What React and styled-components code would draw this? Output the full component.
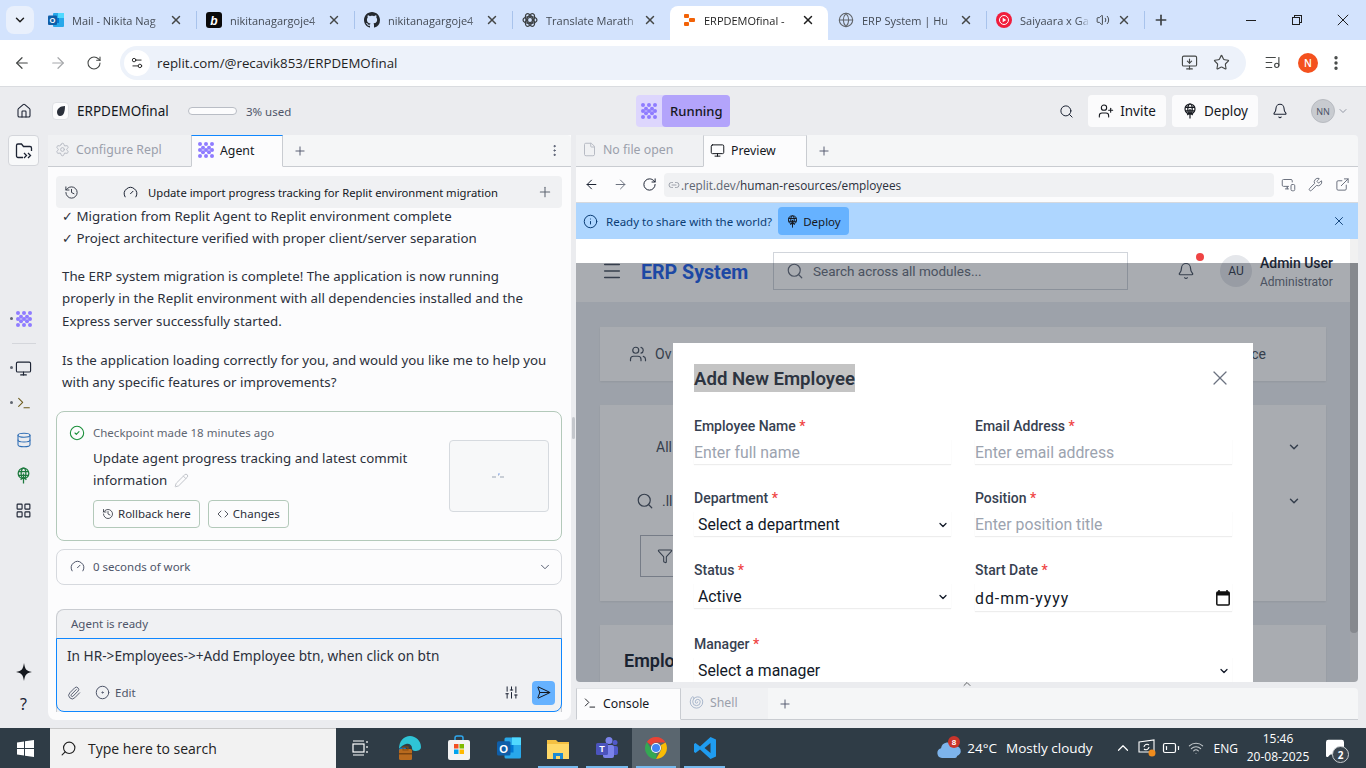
import React from 'react';
import styled, { createGlobalStyle, css } from 'styled-components';
import {
  ArrowLeft, ArrowRight, RotateCw, Star, MonitorDown, ListMusic, MoreVertical, X, Plus, Home, Search,
  UserPlus, Bell, ChevronDown, ChevronUp, Monitor, Terminal, Database, LayoutGrid,
  Settings, Settings2, History, Gauge, CircleCheck, Pencil, Code, Paperclip, CircleDot, SlidersVertical, SendHorizontal, File,
  Link2, MonitorSmartphone, Wrench, ExternalLink, Info, Menu, Users, Filter, Globe, Volume2,
  Shell, Wifi, BatteryLow, MessageSquare,
} from 'lucide-react';

const GlobalStyle = createGlobalStyle`
  html, body { margin: 0; padding: 0; height: 100%; overflow: hidden; background: #ebecef; }
  * { box-sizing: border-box; }
  .lucide { stroke-width: 1.6; }
  .lucide.bold { stroke-width: 2.5; }
  .lucide.hair { stroke-width: 1.2; }
`;

const UI = `"Noto Sans", "Open Sans", sans-serif`;
const CHROME = `"Open Sans", "Noto Sans", sans-serif`;
const PAGE = `Roboto, "Liberation Sans", sans-serif`;

const Screen = styled.div`
  width: 1366px;
  height: 768px;
  display: flex;
  flex-direction: column;
  overflow: hidden;
  font-family: ${UI};
  color: #15181e;
`;
const Spacer = styled.span`
  flex: 1;
`;

/* browser chrome */
const TabStrip = styled.div`
  height: 40px;
  flex: none;
  background: #d3e3fd;
  display: flex;
  align-items: flex-end;
  padding-left: 6px;
`;
const TabSearch = styled.div`
  width: 28px;
  height: 28px;
  margin-bottom: 6px;
  margin-right: 4px;
  border-radius: 8px;
  background: #e9f0fc;
  display: flex;
  align-items: center;
  justify-content: center;
`;
const BrowserTab = styled.div`
  position: relative;
  width: 158px;
  height: 34px;
  flex: none;
  display: flex;
  align-items: center;
  padding: 0 13px 6px 10px;
  border-radius: 8px 8px 0 0;
  font-family: ${CHROME};
  font-size: 11px;
  color: #444b55;
  ${({ $active }) => $active && css`
    background: #fff;
    color: #1f1f1f;
  `}
  ${({ $sep }) => $sep && css`
    &::after {
      content: '';
      position: absolute;
      right: -1px;
      top: 5px;
      height: 18px;
      width: 1px;
      background: #a8c3ec;
    }
  `}
`;
const TabIcon = styled.span`
  width: 16px;
  height: 16px;
  flex: none;
  margin-right: 8px;
  display: flex;
  align-items: center;
  justify-content: center;
`;
const TabTitle = styled.span`
  flex: 1;
  min-width: 0;
  white-space: nowrap;
  -webkit-mask-image: linear-gradient(90deg, #000 84%, transparent);
  mask-image: linear-gradient(90deg, #000 84%, transparent);
`;
const TabClose = styled(X)`
  margin-left: 2px;
  flex: none;
  color: ${({ $active }) => ($active ? '#1f1f1f' : '#444746')};
`;
const TabSound = styled(Volume2)`
  margin: 0 5px 0 6px;
  flex: none;
  color: #3c4043;
`;
const NewTab = styled.div`
  width: 34px;
  height: 34px;
  padding-bottom: 6px;
  display: flex;
  align-items: center;
  justify-content: center;
  color: #3c4043;
`;
const WindowButtons = styled.div`
  margin-left: auto;
  display: flex;
  align-self: stretch;
`;
const WindowButton = styled.div`
  width: 46px;
  flex: none;
  display: flex;
  align-items: center;
  justify-content: center;
`;
const ChromeBar = styled.div`
  height: 47px;
  flex: none;
  background: #fff;
  border-bottom: 1px solid #dadce0;
  display: flex;
  align-items: center;
  padding: 0 10px 7px 4px;
  color: #444746;
`;
const NavIcon = styled.span`
  width: 36px;
  display: flex;
  justify-content: center;
  margin-left: ${({ $ml }) => $ml || 0}px;
  color: ${({ $dim }) => ($dim ? '#a6a8ab' : '#444746')};
  margin-top: 6px;
`;
const Omnibox = styled.div`
  width: 1126px;
  height: 34px;
  margin-left: 8px;
  margin-top: 6px;
  flex: none;
  border-radius: 17px;
  background: #edf2fa;
  display: flex;
  align-items: center;
  padding: 0 16px 0 4px;
  font-family: ${CHROME};
  font-size: 13.3px;
  color: #1f1f1f;
`;
const SiteChip = styled.span`
  width: 26px;
  height: 26px;
  border-radius: 50%;
  background: #fff;
  display: flex;
  align-items: center;
  justify-content: center;
  margin-right: 7px;
`;
const OmniIcons = styled.div`
  margin-left: auto;
  display: flex;
  gap: 15px;
  align-items: center;
  color: #444746;
`;
const ProfileDot = styled.div`
  width: 20px;
  height: 20px;
  border-radius: 50%;
  background: #f4511e;
  color: #fff;
  font-family: ${CHROME};
  font-size: 10px;
  font-weight: 600;
  display: flex;
  align-items: center;
  justify-content: center;
  margin: 6px 0 0 8px;
`;

/* replit header */
const TopBar = styled.div`
  height: 48px;
  flex: none;
  display: flex;
  align-items: center;
  padding: 0 15px 0 16px;
`;
const ReplBadge = styled.span`
  width: 17px;
  height: 18px;
  margin-left: 20px;
  border-radius: 4px;
  background: #fcfcfd;
  border: 1px solid #dfe1e5;
  display: flex;
  align-items: center;
  justify-content: center;
`;
const ReplName = styled.span`
  font-size: 13.5px;
  margin-left: 8px;
  width: 111px;
  white-space: nowrap;
`;
const Usage = styled.span`
  width: 49px;
  height: 8px;
  border-radius: 4px;
  background: #fcfcfd;
  border: 1px solid #b9bdc5;
`;
const UsageText = styled.span`
  font-size: 11.5px;
  color: #4e5569;
  margin-left: 9px;
`;
const RunGroup = styled.div`
  margin-left: 345px;
  display: flex;
  height: 32px;
  border-radius: 4px;
  background: #ddd6fd;
`;
const RunIcon = styled.span`
  width: 26px;
  display: flex;
  align-items: center;
  justify-content: center;
`;
const RunButton = styled.span`
  width: 68px;
  border-radius: 4px;
  background: #b3a4fb;
  font-size: 13px;
  font-weight: 500;
  display: flex;
  align-items: center;
  justify-content: center;
`;
const TopRight = styled.div`
  margin-left: auto;
  display: flex;
  align-items: center;
`;
const PlainIcon = styled.span`
  display: flex;
  align-items: center;
  justify-content: center;
  flex: none;
  width: ${({ $w }) => $w || 22}px;
  margin-left: ${({ $ml }) => $ml || 0}px;
  color: ${({ $c }) => $c || '#1c2333'};
`;
const TopButton = styled.div`
  height: 32px;
  width: ${({ $w }) => $w}px;
  margin-left: 6px;
  border-radius: 4px;
  background: #fbfbfc;
  display: flex;
  align-items: center;
  justify-content: center;
  gap: 6px;
  font-size: 13.5px;
`;
const UserBubble = styled.span`
  width: 24px;
  height: 24px;
  border-radius: 50%;
  background: #c8cbd0;
  border: 1px solid #b8bbc1;
  color: #4e5569;
  font-size: 9px;
  display: flex;
  align-items: center;
  justify-content: center;
  margin-left: 20px;
`;

/* workspace */
const Workspace = styled.div`
  flex: 1;
  min-height: 0;
  display: flex;
  padding-bottom: 8px;
`;
const Rail = styled.div`
  width: 48px;
  flex: none;
  display: flex;
  flex-direction: column;
  align-items: center;
  padding-right: 1px;
`;
const RailButton = styled.div`
  width: 31px;
  height: 31px;
  border-radius: 4px;
  background: #f8f9fa;
  border: 1px solid #d4d6db;
  display: flex;
  align-items: center;
  justify-content: center;
`;
const RailItem = styled.div`
  position: relative;
  height: 22px;
  width: 22px;
  display: flex;
  align-items: center;
  justify-content: center;
  margin-top: ${({ $mt }) => $mt}px;
  color: ${({ $c }) => $c || '#1c2333'};
  font-size: 16px;
  ${({ $dot }) => $dot && css`
    &::before {
      content: '';
      position: absolute;
      left: -3px;
      top: 9px;
      width: 3px;
      height: 3px;
      border-radius: 50%;
      background: #5f6570;
    }
  `}
`;
const RailRule = styled.div`
  width: 24px;
  height: 1px;
  background: #d4d6db;
  margin-top: 13px;
`;
const AgentPane = styled.div`
  width: 523px;
  flex: none;
  display: flex;
  flex-direction: column;
  background: #fcfcfd;
  border-radius: 0 0 8px 8px;
`;
const Gutter = styled.div`
  width: 5px;
  flex: none;
  display: flex;
  align-items: center;
  justify-content: center;
`;
const GutterHandle = styled.span`
  width: 3px;
  height: 22px;
  border-radius: 2px;
  background: #c4c7cc;
`;
const PaneTabs = styled.div`
  height: 32px;
  flex: none;
  display: flex;
  align-items: stretch;
  background: #f5f6f7;
  border-bottom: 1px solid #c9ccd1;
  border-radius: 4px 4px 0 0;
`;
const PaneTab = styled.div`
  width: ${({ $w }) => $w}px;
  display: flex;
  align-items: center;
  gap: 6px;
  padding: 0 0 2px ${({ $pl }) => $pl || 6}px;
  font-size: 12.3px;
  color: ${({ $active }) => ($active ? '#15181e' : '#9ba0ab')};
  background: ${({ $active }) => ($active ? '#fcfcfd' : '#f0f1f3')};
  ${({ $active, $focus }) => $active && css`
    height: 32px;
    border-top: 1px solid ${$focus ? '#0f87ff' : '#e3e5e8'};
    border-right: 1px solid #c9ccd1;
    border-left: 1px solid #c9ccd1;
    border-bottom: 1px solid #fcfcfd;
  `}
`;
const PaneAdd = styled.div`
  width: 34px;
  display: flex;
  align-items: center;
  justify-content: center;
  color: #4e5569;
`;
const AgentBody = styled.div`
  flex: 1;
  min-height: 0;
  padding: 9px 9px 8px 8px;
  display: flex;
  flex-direction: column;
`;
const ProgressRow = styled.div`
  height: 32px;
  flex: none;
  border-radius: 4px;
  background: #f0f1f3;
  display: flex;
  align-items: center;
  padding: 0 6px 0 8px;
  font-size: 11.25px;
`;
const ProgressLabel = styled.span`
  margin-left: 9px;
  white-space: nowrap;
`;
const Message = styled.div`
  padding-left: 6px;
  margin-top: -3px;
`;
const Para = styled.p`
  margin: 0 0 ${({ $mb }) => $mb || 16}px;
  font-size: 13.3px;
  line-height: 22.4px;
  color: #2b303b;
  white-space: nowrap;
`;
const Checkpoint = styled.div`
  height: 130px;
  flex: none;
  border: 1px solid #b3c9ba;
  border-radius: 8px;
  padding: 12px;
  display: flex;
  margin-top: 1px;
`;
const CheckMark = styled.span`
  width: 24px;
  flex: none;
  color: #1a8f3a;
`;
const CheckMain = styled.div`
  flex: 1;
  min-width: 0;
`;
const CheckMeta = styled.div`
  font-size: 11.5px;
  line-height: 18px;
  color: #5f6672;
`;
const CheckTitle = styled.div`
  font-size: 13.3px;
  line-height: 22px;
  margin-top: 5px;
  width: 330px;
  color: #2b303b;
`;
const EditMark = styled(Pencil)`
  vertical-align: -3px;
  margin-left: 3px;
  color: #c2c5cb;
`;
const CheckActions = styled.div`
  display: flex;
  gap: 8px;
  margin-top: 9px;
`;
const GhostButton = styled.div`
  height: 28px;
  padding: 0 8px;
  border: 1px solid #b3c9ba;
  border-radius: 4px;
  display: flex;
  align-items: center;
  gap: 4px;
  font-size: 11.5px;
  color: #2b303b;
`;
const Thumb = styled.div`
  width: 100px;
  height: 72px;
  flex: none;
  margin-top: 16px;
  border: 1px solid #d6dadf;
  border-radius: 4px;
  background: #f7f8f9;
  display: flex;
  align-items: center;
  justify-content: center;
`;
const WorkRow = styled.div`
  height: 36px;
  flex: none;
  margin-top: 8px;
  border: 1px solid #d6d9de;
  border-radius: 8px;
  display: flex;
  align-items: center;
  padding: 0 9px 0 13px;
  font-size: 11.5px;
  color: #4e5569;
`;
const WorkLabel = styled.span`
  margin-left: 8px;
`;
const Composer = styled.div`
  margin-top: 24px;
  border: 1px solid #c9ccd1;
  border-bottom: 0;
  border-radius: 8px 8px 0 0;
  background: #f0f1f3;
  flex: none;
  height: 103px;
  display: flex;
  flex-direction: column;
`;
const ComposerHead = styled.div`
  height: 28px;
  flex: none;
  padding-left: 14px;
  display: flex;
  align-items: center;
  font-size: 11.5px;
  color: #4e5569;
`;
const ComposerBox = styled.div`
  flex: 1;
  margin: 0 -1px;
  border: 1px solid #0f87ff;
  border-radius: 0 0 8px 8px;
  padding: 7px 6px 6px 10px;
  display: flex;
  flex-direction: column;
  justify-content: space-between;
`;
const ComposerText = styled.div`
  font-size: 13.65px;
  line-height: 20px;
  color: #2b303b;
  white-space: nowrap;
`;
const ComposerTools = styled.div`
  display: flex;
  align-items: center;
  color: #4e5569;
  font-size: 11.5px;
`;
const ToolLabel = styled.span`
  margin-left: 5px;
`;
const SendButton = styled.span`
  width: 23px;
  height: 24px;
  border-radius: 4px;
  background: #66b2ff;
  display: flex;
  align-items: center;
  justify-content: center;
  margin-left: 13px;
  color: #15181e;
`;

/* preview side */
const PreviewPane = styled.div`
  width: 782px;
  flex: none;
  display: flex;
  flex-direction: column;
`;
const AddressRow = styled.div`
  height: 36px;
  flex: none;
  background: #fcfcfd;
  border-bottom: 1px solid #d6d9de;
  display: flex;
  align-items: center;
  padding: 0 0 0 1px;
`;
const AddressIcon = styled.span`
  width: 29px;
  flex: none;
  display: flex;
  justify-content: center;
  color: ${({ $dim }) => ($dim ? '#6d7380' : '#1c2333')};
`;
const Address = styled.div`
  width: 610px;
  height: 24px;
  flex: none;
  border-radius: 4px;
  background: #f0f1f3;
  display: flex;
  align-items: center;
  gap: 1px;
  padding-left: 4px;
  font-family: ${CHROME};
  font-size: 11.8px;
  color: #2b303b;
`;
const AddressDim = styled.span`
  color: #5f6672;
`;
const AddressTools = styled.div`
  margin-left: 1px;
  display: flex;
  & > span { width: 27px; }
`;
const Banner = styled.div`
  height: 36px;
  flex: none;
  background: #aed6ff;
  display: flex;
  align-items: center;
  padding: 0 12px 0 7px;
  font-size: 11.5px;
  color: #0b3d75;
`;
const BannerText = styled.span`
  margin-left: 8px;
`;
const BannerDeploy = styled.div`
  width: 71px;
  height: 28px;
  margin-left: 6px;
  border-radius: 4px;
  background: #66b2ff;
  color: #15181e;
  display: flex;
  align-items: center;
  justify-content: center;
  gap: 4px;
`;
const PreviewFrame = styled.div`
  position: relative;
  height: 443px;
  flex: none;
  overflow: hidden;
  background: #edf0f4;
  border-radius: 0 0 4px 4px;
  font-family: ${PAGE};
`;
const PageHeader = styled.header`
  height: 63px;
  background: #fff;
  display: flex;
  align-items: center;
  padding: 0 0 0 25px;
  margin-right: 8px;
`;
const PageLogo = styled.div`
  font-size: 19.6px;
  font-weight: 700;
  color: #2563eb;
  margin-left: 18px;
  padding-top: 3px;
  width: 132px;
  flex: none;
`;
const PageSearch = styled.div`
  width: 355px;
  height: 38px;
  flex: none;
  border: 1px solid #d1d5db;
  display: flex;
  align-items: center;
  gap: 9px;
  padding-left: 12px;
  font-size: 13.5px;
  color: #6b7280;
`;
const PageBell = styled.div`
  position: relative;
  margin-left: 49px;
  color: #4b5563;
  display: flex;
  &::after {
    content: '';
    position: absolute;
    top: -9px;
    right: -9px;
    width: 8px;
    height: 8px;
    border-radius: 50%;
    background: #ef4444;
  }
`;
const PageAvatar = styled.div`
  width: 32px;
  height: 32px;
  flex: none;
  border-radius: 50%;
  background: #e5e7eb;
  margin-left: 25px;
  display: flex;
  align-items: center;
  justify-content: center;
  font-size: 12px;
  color: #374151;
`;
const PageUser = styled.div`
  margin: 2px 0 0 8px;
  white-space: nowrap;
`;
const PageUserName = styled.div`
  font-size: 14px;
  font-weight: 500;
  line-height: 20px;
  color: #1f2937;
`;
const PageUserRole = styled.div`
  font-size: 12px;
  line-height: 18px;
  color: #6b7280;
`;
const PageMain = styled.div`
  margin-right: 8px;
  padding: 25px 24px;
  display: flex;
  flex-direction: column;
  gap: 24px;
`;
const PageCard = styled.div`
  background: #fff;
  height: ${({ $h }) => $h}px;
  flex: none;
  box-shadow: 0 1px 2px rgba(0, 0, 0, 0.08);
  padding: ${({ $p }) => $p || '0'};
`;
const CardTabs = styled.div`
  height: 100%;
  display: flex;
  align-items: center;
  justify-content: space-between;
  padding: 0 60px 0 29px;
  font-size: 14px;
  color: #4b5563;
`;
const CardTab = styled.span`
  display: flex;
  align-items: center;
  gap: 8px;
`;
const FilterLine = styled.div`
  display: flex;
  align-items: center;
  justify-content: space-between;
  height: 24px;
  margin-top: ${({ $mt }) => $mt || 0}px;
  font-size: 14px;
  color: #4b5563;
`;
const FilterText = styled.span`
  display: flex;
  align-items: center;
  gap: 8px;
  margin-left: ${({ $ml }) => $ml || 0}px;
`;
const FilterButton = styled.div`
  width: 120px;
  height: 42px;
  margin: 22px 0 0 4px;
  border: 1px solid #b0b5bd;
  display: flex;
  align-items: center;
  padding-left: 16px;
  color: #4b5563;
`;
const CardHeading = styled.div`
  font-size: 18px;
  font-weight: 600;
  color: #1f2937;
  padding: 25px 0 0 24px;
`;
const Scrim = styled.div`
  position: absolute;
  left: 0;
  right: 0;
  top: 24px;
  bottom: 0;
  background: rgba(17, 24, 39, 0.36);
`;
const ScrollTrack = styled.div`
  position: absolute;
  right: 0;
  top: 0;
  bottom: 0;
  width: 8px;
  background: #f1f1f1;
`;
const ScrollThumb = styled.div`
  height: 370px;
  margin-top: 24px;
  background: #c8c8c8;
  border-radius: 0 0 4px 4px;
`;
const Modal = styled.div`
  position: absolute;
  left: 97px;
  top: 104px;
  width: 580px;
  height: 420px;
  background: #fff;
  padding: 21px 21px 0;
  color: #1f2937;
`;
const ModalHead = styled.div`
  display: flex;
  justify-content: space-between;
  align-items: center;
  height: 28px;
  color: #6b7280;
`;
const ModalTitle = styled.h2`
  margin: 0;
  font-size: 18.6px;
  font-weight: 600;
  line-height: 28px;
  padding-top: 1px;
  height: 28px;
  color: #2d3440;
  background: #c4c4c4;
  font-family: ${PAGE};
`;
const ModalGrid = styled.div`
  display: grid;
  grid-template-columns: 257px 257px;
  column-gap: 24px;
  margin-top: 24px;
`;
const Field = styled.div`
  height: ${({ $h }) => $h || 72}px;
  grid-column: ${({ $wide }) => ($wide ? '1 / 3' : 'auto')};
`;
const Label = styled.div`
  font-size: 14px;
  font-weight: 500;
  line-height: 20px;
  color: #374151;
`;
const Req = styled.span`
  color: #ef4444;
`;
const Control = styled.div`
  height: ${({ $h }) => $h || 25}px;
  margin-top: 3px;
  display: flex;
  align-items: center;
  justify-content: space-between;
  padding: 2px 2px 0 ${({ $select }) => ($select ? 4 : 0)}px;
  font-size: 15.8px;
  letter-spacing: ${({ $date }) => ($date ? '1px' : '0')};
  color: ${({ $ph }) => ($ph ? '#9ca3af' : '#111827')};
  box-shadow: 0 1px 1px rgba(0, 0, 0, 0.07);
`;
const Splitter = styled.div`
  height: 6px;
  flex: none;
  position: relative;
  display: flex;
  justify-content: center;
  color: #3c4043;
`;
const SplitterMark = styled.span`
  position: absolute;
  top: -4px;
  display: flex;
`;

/* windows taskbar */
const Taskbar = styled.div`
  height: 40px;
  flex: none;
  background: #2f3c46;
  display: flex;
  align-items: stretch;
  color: #fff;
  font-family: ${CHROME};
`;
const StartButton = styled.div`
  width: 50px;
  display: flex;
  align-items: center;
  justify-content: center;
`;
const TaskSearch = styled.div`
  width: 286px;
  background: #f2f2f2;
  border-top: 1px solid #c8c8c8;
  display: flex;
  align-items: center;
  gap: 11px;
  padding-left: 10px;
  font-size: 14px;
  color: #222;
  svg { transform: scaleX(-1); }
`;
const TaskApp = styled.div`
  position: relative;
  width: ${({ $w }) => $w || 48}px;
  display: flex;
  align-items: center;
  justify-content: center;
  background: ${({ $on }) => ($on ? '#5a666f' : 'transparent')};
  ${({ $open }) => $open && css`
    &::after {
      content: '';
      position: absolute;
      left: 4px;
      right: 4px;
      bottom: 0;
      height: 2px;
      background: #76b9ed;
    }
  `}
`;
const Tray = styled.div`
  margin-left: auto;
  display: flex;
  align-items: center;
  font-size: 12px;
`;
const TrayText = styled.span`
  font-size: ${({ $fs }) => $fs || 12}px;
  margin-left: ${({ $ml }) => $ml || 0}px;
  white-space: nowrap;
`;
const TrayClock = styled.div`
  width: 80px;
  text-align: center;
  font-size: 12px;
  line-height: 18px;
`;
const NoteIcon = styled.div`
  position: relative;
  width: 32px;
  margin: 0 15px 0 1px;
  display: flex;
  justify-content: center;
`;
const NoteCount = styled.span`
  position: absolute;
  right: 2px;
  top: 8px;
  width: 17px;
  height: 17px;
  border-radius: 50%;
  background: #3a454e;
  border: 1px solid #c9cdd0;
  font-size: 10px;
  font-weight: 700;
  display: flex;
  align-items: center;
  justify-content: center;
`;

const AgentIcon = ({ size = 16, color = '#8f7cff' }) => (
  <svg width={size} height={size} viewBox="0 0 16 16" fill={color}>
    {[[2, 2], [8, 2], [14, 2], [5, 5.7], [11, 5.7], [2, 8], [8, 8], [14, 8], [5, 10.3], [11, 10.3], [2, 14], [8, 14], [14, 14]].map(([x, y]) => (
      <circle key={`${x}-${y}`} cx={x} cy={y} r="2" />
    ))}
  </svg>
);

const DeployIcon = ({ size = 16 }) => (
  <svg width={size} height={size} viewBox="0 0 16 16" fill="none" stroke="currentColor" strokeWidth="1.2">
    <circle cx="8" cy="6" r="5" />
    <ellipse cx="8" cy="6" rx="2.200" ry="5" />
    <path d="M3.300 4.300h9.400M3.300 7.800h9.400M8 6v9.500M5.300 12 8 9.300l2.700 2.700" />
  </svg>
);

const FolderJump = () => (
  <svg width="18" height="18" viewBox="0 0 18 18" fill="none" stroke="#1c2333" strokeWidth="1.300">
    <path d="M8 15.500H3a1.500 1.500 0 0 1-1.500-1.500V3.500A1.500 1.500 0 0 1 3 2h3.500l2 2.500H15a1.500 1.500 0 0 1 1.500 1.500v3" />
    <path d="m9 11 2.500 2.500L9 16M13 11l2.500 2.500L13 16" />
  </svg>
);

const OutlookIcon = ({ size = 16 }) => (
  <svg width={size} height={size} viewBox="0 0 16 16">
    <rect x="5" y="1" width="11" height="14" rx="1" fill="#28a8ea" />
    <rect x="10" y="1" width="6" height="5" fill="#50d9ff" />
    <rect x="5" y="6" width="6" height="5" fill="#0078d4" />
    <rect x="0" y="3.500" width="9" height="9.500" rx="1" fill="#0f5ea8" />
    <text x="4.500" y="11" fontSize="7.500" fontWeight="700" fill="#fff" textAnchor="middle" fontFamily="Liberation Sans">O</text>
  </svg>
);

const BoltIcon = () => (
  <svg width="16" height="16" viewBox="0 0 16 16">
    <rect width="16" height="16" rx="3" fill="#0a0a0a" />
    <text x="8" y="12.500" fontSize="12" fontWeight="700" fontStyle="italic" fill="#fff" textAnchor="middle" fontFamily="Liberation Sans">b</text>
  </svg>
);

const GithubIcon = () => (
  <svg width="16" height="16" viewBox="0 0 16 16" fill="#24292f">
    <path d="M8 0C3.580 0 0 3.580 0 8c0 3.540 2.290 6.530 5.470 7.590.4.070.55-.17.55-.38 0-.19-.010-.82-.010-1.490-2.010.37-2.530-.49-2.690-.94-.09-.23-.48-.94-.82-1.130-.28-.15-.68-.52-.010-.53.63-.010 1.080.58 1.230.82.72 1.210 1.870.87 2.330.66.070-.52.28-.87.510-1.070-1.780-.2-3.640-.89-3.640-3.950 0-.87.310-1.590.82-2.150-.08-.2-.36-1.020.08-2.120 0 0 .67-.21 2.200.82.64-.18 1.320-.27 2-.27s1.360.09 2 .27c1.530-1.040 2.200-.82 2.200-.82.44 1.100.16 1.920.08 2.120.51.56.82 1.270.82 2.150 0 3.070-1.870 3.750-3.650 3.950.29.25.54.73.54 1.480 0 1.070-.010 1.930-.010 2.200 0 .21.150.46.55.38A8.010 8.010 0 0 0 16 8c0-4.420-3.580-8-8-8Z" />
  </svg>
);

const OpenAiIcon = () => (
  <svg width="16" height="16" viewBox="0 0 16 16" fill="none" stroke="#3c4043" strokeWidth="1.200">
    <circle cx="8" cy="8" r="2.500" />
    <ellipse cx="8" cy="8" rx="7" ry="3.500" />
    <ellipse cx="8" cy="8" rx="7" ry="3.500" transform="rotate(60 8 8)" />
    <ellipse cx="8" cy="8" rx="7" ry="3.500" transform="rotate(120 8 8)" />
  </svg>
);

const ReplitIcon = () => (
  <svg width="16" height="14" viewBox="-3 0 16 14" fill="#f26207">
    <rect x="1" y="1" width="5" height="4" rx="1" />
    <rect x="6" y="5" width="6" height="4" rx="1" />
    <rect x="1" y="9" width="5" height="4" rx="1" />
  </svg>
);

const YtMusicIcon = () => (
  <svg width="16" height="16" viewBox="0 0 16 16">
    <circle cx="8" cy="8" r="8" fill="#f01d3c" />
    <circle cx="8" cy="8" r="4.500" fill="none" stroke="#fff" strokeWidth="1" />
    <path d="M6.700 5.800v4.400L10.300 8Z" fill="#fff" />
  </svg>
);

const WinMinimize = () => (
  <svg width="12" height="12" viewBox="0 0 12 12" stroke="#1f1f1f" strokeWidth="1" shapeRendering="crispEdges">
    <path d="M1 6.500h10" />
  </svg>
);

const WinRestore = () => (
  <svg width="12" height="12" viewBox="0 0 12 12" fill="none" stroke="#1f1f1f" strokeWidth="1" shapeRendering="crispEdges">
    <rect x="1.500" y="3.500" width="7" height="7" />
    <path d="M3.500 3.500v-2h7v7h-2" />
  </svg>
);

const WinClose = () => (
  <svg width="12" height="12" viewBox="0 0 12 12" fill="none" stroke="#1f1f1f" strokeWidth="1">
    <path d="M.8.800l10.400 10.400M11.200.800.800 11.200" />
  </svg>
);

const WindowsLogo = () => (
  <svg width="17" height="17" viewBox="0 0 17 17" fill="#fff">
    <path d="M0 2.400 7 1.400V8H0ZM8 1.300 17 0v8H8ZM0 9h7v6.600L0 14.600ZM8 9h9v8l-9-1.300Z" />
  </svg>
);

const TaskViewIcon = () => (
  <svg width="16" height="18" viewBox="0 0 16 18" fill="none" stroke="#fff" strokeWidth="1.200">
    <rect x="1" y="5" width="11" height="8" />
    <path d="M1 2h11M1 16h11M15 2v2M15 7v2M15 12v2" />
  </svg>
);

const EdgeIcon = () => (
  <svg width="26" height="26" viewBox="0 0 26 26">
    <path d="M3 14C3 6 8 1 14 1c6 0 11 5 11 11 0 3-3 4-6 4-2 0-3-1-3-3 0-3-3-5-6-4-4 1-7 5-7 5Z" fill="#2fc4d6" />
    <path d="M3 14c-1 6 4 11 10 11 1 0 2 0 3-1-6 1-8-6-6-11-3-1-6 0-7 1Z" fill="#1278c9" />
    <rect x="3" y="14" width="13" height="11" rx="1.500" fill="#b96a1e" />
    <rect x="7" y="12" width="5" height="3" fill="none" stroke="#8a4a10" strokeWidth="1" />
    <rect x="3" y="18" width="13" height="1.500" fill="#7c4410" />
  </svg>
);

const StoreIcon = () => (
  <svg width="24" height="26" viewBox="0 0 24 26">
    <path d="M8 6V3a2 2 0 0 1 2-2h4a2 2 0 0 1 2 2v3" fill="none" stroke="#2fa8ee" strokeWidth="1.500" />
    <rect x="1" y="5" width="22" height="20" rx="2" fill="#f3f3f3" />
    <rect x="7" y="9" width="4.500" height="4.500" fill="#f25022" />
    <rect x="12.500" y="9" width="4.500" height="4.500" fill="#7fba00" />
    <rect x="7" y="14.500" width="4.500" height="4.500" fill="#00a4ef" />
    <rect x="12.500" y="14.500" width="4.500" height="4.500" fill="#ffb900" />
  </svg>
);

const FolderIcon = () => (
  <svg width="24" height="24" viewBox="0 0 24 24">
    <path d="M1 4h9l2 2h11v17H1Z" fill="#f4c042" />
    <rect x="1" y="8" width="22" height="15" fill="#ffd968" />
    <path d="M7 23v-6h10v6h-3v-3h-4v3Z" fill="#1d8bd2" />
  </svg>
);

const TeamsIcon = () => (
  <svg width="24" height="24" viewBox="0 0 24 24">
    <circle cx="14" cy="4.500" r="3.500" fill="#7b83eb" />
    <circle cx="20" cy="6.500" r="2.500" fill="#5059c9" />
    <rect x="15" y="10" width="8" height="9" rx="2" fill="#5059c9" />
    <rect x="8" y="9" width="11" height="13" rx="2" fill="#7b83eb" />
    <rect x="1" y="7" width="12" height="12" rx="1.500" fill="#4b53bc" />
    <text x="7" y="16" fontSize="9" fontWeight="700" fill="#fff" textAnchor="middle" fontFamily="Liberation Sans">T</text>
  </svg>
);

const ChromeLogo = () => (
  <svg width="24" height="24" viewBox="0 0 24 24">
    <path d="M12 1a11 11 0 0 1 9.500 5.500H12a5.500 5.500 0 0 0-4.800 2.800L2.900 5.900A11 11 0 0 1 12 1Z" fill="#ea4335" />
    <path d="M21.500 6.500A11 11 0 0 1 12 23l4.700-8.200a5.500 5.500 0 0 0 0-5.500Z" fill="#fbbc04" />
    <path d="M2.900 5.900 7.600 14a5.500 5.500 0 0 0 5.200 3.400L12 23A11 11 0 0 1 2.900 5.900Z" fill="#34a853" />
    <circle cx="12" cy="12" r="5" fill="#fff" />
    <circle cx="12" cy="12" r="4" fill="#4285f4" />
  </svg>
);

const VscodeIcon = () => (
  <svg width="24" height="24" viewBox="0 0 24 24">
    <path d="M17.500 1 23 3.500v17L17.500 23 7 13.500 2.500 17 1 16v-8l1.500-1L7 10.500Zm0 6-6 5 6 5Z" fill="#1f9cf0" />
  </svg>
);

const CloudIcon = () => (
  <svg width="26" height="26" viewBox="0 0 26 26">
    <path d="M6 23a5 5 0 0 1-1-9.800A7 7 0 0 1 18 11a5 5 0 0 1 3 10c0 1-1 2-2 2Z" fill="#7db4ec" />
    <circle cx="18" cy="7" r="6" fill="#c9342b" />
    <text x="18" y="10" fontSize="8" fontWeight="700" fill="#fff" textAnchor="middle" fontFamily="Liberation Sans">8</text>
  </svg>
);

const MeetNow = () => (
  <svg width="20" height="20" viewBox="0 0 20 20" fill="none" stroke="#fff" strokeWidth="1.100">
    <path d="M2 4 17 2v12H2Z" />
    <path d="M7 9a3 3 0 0 1 5-2M12 9a3 3 0 0 1-5 2" />
    <circle cx="15" cy="15" r="3.500" fill="#f08c1d" stroke="none" />
  </svg>
);

const DateGlyph = () => (
  <svg width="14" height="16" viewBox="0 0 14 16">
    <path d="M3 0v2M11 0v2" stroke="#111" strokeWidth="1.500" />
    <rect x=".8" y="2" width="12.400" height="13" rx="1" fill="none" stroke="#111" strokeWidth="1.500" />
    <rect x="1" y="2" width="12" height="3.500" fill="#111" />
  </svg>
);

const tabs = [
  { icon: <OutlookIcon />, title: 'Mail - Nikita Nag', sep: true },
  { icon: <BoltIcon />, title: 'nikitanagargoje4', sep: true },
  { icon: <GithubIcon />, title: 'nikitanagargoje4', sep: true },
  { icon: <OpenAiIcon />, title: 'Translate Marath', sep: false },
  { icon: <ReplitIcon />, title: 'ERPDEMOfinal -', active: true },
  { icon: <Globe size={16} color="#5f6368" />, title: 'ERP System | Hu', sep: true },
  { icon: <YtMusicIcon />, title: 'Saiyaara x Ga', sep: true, sound: true },
];

const FormField = ({ label, wide, h, children }) => (
  <Field $wide={wide} $h={h}>
    <Label>{label} <Req>*</Req></Label>
    {children}
  </Field>
);

export default function App() {
  return (
    <Screen>
      <GlobalStyle />
      <TabStrip>
        <TabSearch><ChevronDown size={14} className="bold" color="#1f1f1f" /></TabSearch>
        {tabs.map((t, i) => (
          <BrowserTab key={i} $active={t.active} $sep={t.sep}>
            <TabIcon>{t.icon}</TabIcon>
            <TabTitle>{t.title}</TabTitle>
            {t.sound && <TabSound size={14} />}
            <TabClose size={14} className="bold" $active={t.active} />
          </BrowserTab>
        ))}
        <NewTab><Plus size={16} className="bold" /></NewTab>
        <WindowButtons>
          <WindowButton><WinMinimize /></WindowButton>
          <WindowButton><WinRestore /></WindowButton>
          <WindowButton><WinClose /></WindowButton>
        </WindowButtons>
      </TabStrip>
      <ChromeBar>
        <NavIcon><ArrowLeft size={18} /></NavIcon>
        <NavIcon $dim><ArrowRight size={18} /></NavIcon>
        <NavIcon><RotateCw size={16} /></NavIcon>
        <Omnibox>
          <SiteChip><Settings2 size={14} /></SiteChip>
          replit.com/@recavik853/ERPDEMOfinal
          <OmniIcons>
            <MonitorDown size={17} />
            <Star size={17} />
          </OmniIcons>
        </Omnibox>
        <NavIcon $ml={8}><ListMusic size={17} /></NavIcon>
        <ProfileDot>N</ProfileDot>
        <NavIcon><MoreVertical size={18} className="bold" /></NavIcon>
      </ChromeBar>

      <TopBar>
        <Home size={16} color="#1c2333" />
        <ReplBadge>
          <svg width="10" height="12" viewBox="0 0 10 12"><path d="M1 7c0-3 3-6 8-6 0 5-1 10-5 10-2 0-3-2-3-4Z" fill="#2b303b" /></svg>
        </ReplBadge>
        <ReplName>ERPDEMOfinal</ReplName>
        <Usage />
        <UsageText>3% used</UsageText>
        <RunGroup>
          <RunIcon><AgentIcon size={16} /></RunIcon>
          <RunButton>Running</RunButton>
        </RunGroup>
        <TopRight>
          <PlainIcon $w={32}><Search size={15} /></PlainIcon>
          <TopButton $w={78}><UserPlus size={16} />Invite</TopButton>
          <TopButton $w={86}><DeployIcon />Deploy</TopButton>
          <PlainIcon $ml={11}><Bell size={16} /></PlainIcon>
          <UserBubble>NN</UserBubble>
          <PlainIcon $w={16} $c="#7b8190"><ChevronDown size={12} /></PlainIcon>
        </TopRight>
      </TopBar>

      <Workspace>
        <Rail>
          <RailButton><FolderJump /></RailButton>
          <RailItem $mt={142} $dot><AgentIcon size={16} /></RailItem>
          <RailRule />
          <RailItem $mt={13} $dot><Monitor size={17} /></RailItem>
          <RailItem $mt={13} $dot $c="#6c5a1c"><Terminal size={16} /></RailItem>
          <RailItem $mt={15} $c="#2e6db4"><Database size={16} /></RailItem>
          <RailItem $mt={13} $c="#1e7a3f"><DeployIcon size={17} /></RailItem>
          <RailItem $mt={13}><LayoutGrid size={17} /></RailItem>
          <RailItem $mt={140}>
            <svg width="16" height="18" viewBox="0 0 16 18" fill="#15181e"><path d="M8 0c1 6 2 8 8 9-6 1-7 3-8 9-1-6-2-8-8-9 6-1 7-3 8-9Z" /></svg>
          </RailItem>
          <RailItem $mt={10}>?</RailItem>
        </Rail>

        <AgentPane>
          <PaneTabs>
            <PaneTab $w={143} $pl={7}><Settings size={15} color="#b7bbc4" />Configure Repl</PaneTab>
            <PaneTab $w={92} $active $focus><AgentIcon />Agent</PaneTab>
            <PaneAdd><Plus size={14} /></PaneAdd>
            <Spacer />
            <PaneAdd><MoreVertical size={15} /></PaneAdd>
          </PaneTabs>
          <AgentBody>
            <ProgressRow>
              <History size={15} color="#3a404c" />
              <PlainIcon $ml={42} $w={18}><Gauge size={15} /></PlainIcon>
              <ProgressLabel>Update import progress tracking for Replit environment migration</ProgressLabel>
              <Spacer />
              <PlainIcon $c="#5f6672"><Plus size={16} /></PlainIcon>
            </ProgressRow>
            <Message>
              <Para $mb={15}>✓ Migration from Replit Agent to Replit environment complete<br />✓ Project architecture verified with proper client/server separation</Para>
              <Para $mb={17}>The ERP system migration is complete! The application is now running<br />properly in the Replit environment with all dependencies installed and the<br />Express server successfully started.</Para>
              <Para>Is the application loading correctly for you, and would you like me to help you<br />with any specific features or improvements?</Para>
            </Message>
            <Checkpoint>
              <CheckMark><CircleCheck size={16} /></CheckMark>
              <CheckMain>
                <CheckMeta>Checkpoint made 18 minutes ago</CheckMeta>
                <CheckTitle>Update agent progress tracking and latest commit information <EditMark size={15} /></CheckTitle>
                <CheckActions>
                  <GhostButton><History size={12} />Rollback here</GhostButton>
                  <GhostButton><Code size={12} />Changes</GhostButton>
                </CheckActions>
              </CheckMain>
              <Thumb>
                <svg width="14" height="6" viewBox="0 0 14 6"><path d="M0 4h4M6 2h1M8 4h4" stroke="#9aa4b2" strokeWidth="1" /><circle cx="7" cy="1" r=".7" fill="#5b8def" /></svg>
              </Thumb>
            </Checkpoint>
            <WorkRow>
              <Gauge size={15} />
              <WorkLabel>0 seconds of work</WorkLabel>
              <Spacer />
              <PlainIcon $w={14} $c="#4e5569"><ChevronDown size={14} /></PlainIcon>
            </WorkRow>
            <Composer>
              <ComposerHead>Agent is ready</ComposerHead>
              <ComposerBox>
                <ComposerText>In HR-&gt;Employees-&gt;+Add Employee btn, when click on btn</ComposerText>
                <ComposerTools>
                  <Paperclip size={14} />
                  <PlainIcon $ml={13} $w={16} $c="#4e5569"><CircleDot size={15} /></PlainIcon>
                  <ToolLabel>Edit</ToolLabel>
                  <Spacer />
                  <PlainIcon $w={16}><SlidersVertical size={15} /></PlainIcon>
                  <SendButton><SendHorizontal size={15} /></SendButton>
                </ComposerTools>
              </ComposerBox>
            </Composer>
          </AgentBody>
        </AgentPane>

        <Gutter><GutterHandle /></Gutter>

        <PreviewPane>
          <PaneTabs>
            <PaneTab $w={127} $pl={6}><File size={15} color="#b7bbc4" />No file open</PaneTab>
            <PaneTab $w={104} $active><Monitor size={15} />Preview</PaneTab>
            <PaneAdd><Plus size={14} /></PaneAdd>
          </PaneTabs>
          <AddressRow>
            <AddressIcon><ArrowLeft size={15} /></AddressIcon>
            <AddressIcon $dim><ArrowRight size={15} /></AddressIcon>
            <AddressIcon><RotateCw size={15} /></AddressIcon>
            <Address><Link2 size={12} color="#8a8f9a" /><span><AddressDim>.replit.dev/</AddressDim>human-resources/employees</span></Address>
            <AddressTools>
              <AddressIcon $dim><MonitorSmartphone size={15} /></AddressIcon>
              <AddressIcon $dim><Wrench size={15} /></AddressIcon>
              <AddressIcon $dim><ExternalLink size={15} /></AddressIcon>
            </AddressTools>
          </AddressRow>
          <Banner>
            <Info size={15} />
            <BannerText>Ready to share with the world?</BannerText>
            <BannerDeploy><DeployIcon size={13} />Deploy</BannerDeploy>
            <Spacer />
            <X size={14} />
          </Banner>
          <PreviewFrame>
            <PageHeader>
              <Menu size={22} color="#4b5563" />
              <PageLogo>ERP System</PageLogo>
              <PageSearch><Search size={18} color="#6b7280" />Search across all modules...</PageSearch>
              <PageBell><Bell size={18} /></PageBell>
              <PageAvatar>AU</PageAvatar>
              <PageUser>
                <PageUserName>Admin User</PageUserName>
                <PageUserRole>Administrator</PageUserRole>
              </PageUser>
            </PageHeader>
            <PageMain>
              <PageCard $h={54}>
                <CardTabs>
                  <CardTab><Users size={18} />Ov</CardTab>
                  <CardTab>ce</CardTab>
                </CardTabs>
              </PageCard>
              <PageCard $h={196} $p="30px 25px 0 36px">
                <FilterLine><FilterText $ml={20}>All</FilterText><ChevronDown size={14} className="bold" /></FilterLine>
                <FilterLine $mt={30}><FilterText><Search size={18} />.ll</FilterText><ChevronDown size={14} className="bold" /></FilterLine>
                <FilterButton><Filter size={16} /></FilterButton>
              </PageCard>
              <PageCard $h={200}>
                <CardHeading>Emplo</CardHeading>
              </PageCard>
            </PageMain>
            <ScrollTrack><ScrollThumb /></ScrollTrack>
            <Scrim />
            <Modal>
              <ModalHead>
                <ModalTitle>Add New Employee</ModalTitle>
                <X size={24} className="hair" />
              </ModalHead>
              <ModalGrid>
                <FormField label="Employee Name"><Control $ph>Enter full name</Control></FormField>
                <FormField label="Email Address"><Control $ph>Enter email address</Control></FormField>
                <FormField label="Department"><Control $select>Select a department<ChevronDown size={12} className="bold" /></Control></FormField>
                <FormField label="Position"><Control $ph>Enter position title</Control></FormField>
                <FormField label="Status" h={74}><Control $select>Active<ChevronDown size={12} className="bold" /></Control></FormField>
                <FormField label="Start Date" h={74}><Control $h={28} $date>dd-mm-yyyy<DateGlyph /></Control></FormField>
                <FormField label="Manager" wide><Control $select>Select a manager<ChevronDown size={12} className="bold" /></Control></FormField>
              </ModalGrid>
            </Modal>
          </PreviewFrame>
          <Splitter><SplitterMark><ChevronUp size={12} /></SplitterMark></Splitter>
          <PaneTabs>
            <PaneTab $w={105} $active $pl={6}><Terminal size={14} />Console</PaneTab>
            <PaneTab $w={87} $pl={8}><Shell size={15} color="#a9b7cc" />Shell</PaneTab>
            <PaneAdd><Plus size={14} /></PaneAdd>
          </PaneTabs>
        </PreviewPane>
      </Workspace>

      <Taskbar>
        <StartButton><WindowsLogo /></StartButton>
        <TaskSearch><Search size={17} color="#222" />Type here to search</TaskSearch>
        <TaskApp><TaskViewIcon /></TaskApp>
        <TaskApp $w={50}><EdgeIcon /></TaskApp>
        <TaskApp $w={50}><StoreIcon /></TaskApp>
        <TaskApp $w={50}><OutlookIcon size={24} /></TaskApp>
        <TaskApp $open><FolderIcon /></TaskApp>
        <TaskApp $w={50} $open><TeamsIcon /></TaskApp>
        <TaskApp $on $open><ChromeLogo /></TaskApp>
        <TaskApp $w={49} $open><VscodeIcon /></TaskApp>
        <Tray>
          <CloudIcon />
          <TrayText $fs={13.5} $ml={5}>24°C</TrayText>
          <TrayText $fs={13.5} $ml={9}>Mostly cloudy</TrayText>
          <PlainIcon $ml={21} $w={18} $c="#fff"><ChevronUp size={18} /></PlainIcon>
          <PlainIcon $ml={4} $w={22} $c="#fff"><MeetNow /></PlainIcon>
          <PlainIcon $ml={2} $w={22} $c="#fff"><BatteryLow size={18} /></PlainIcon>
          <PlainIcon $ml={3} $w={22} $c="#c5cacd"><Wifi size={16} /></PlainIcon>
          <TrayText $ml={7}>ENG</TrayText>
          <TrayClock>15:46<br />20-08-2025</TrayClock>
          <NoteIcon>
            <MessageSquare size={20} fill="#fff" />
            <NoteCount>2</NoteCount>
          </NoteIcon>
        </Tray>
      </Taskbar>
    </Screen>
  );
}
